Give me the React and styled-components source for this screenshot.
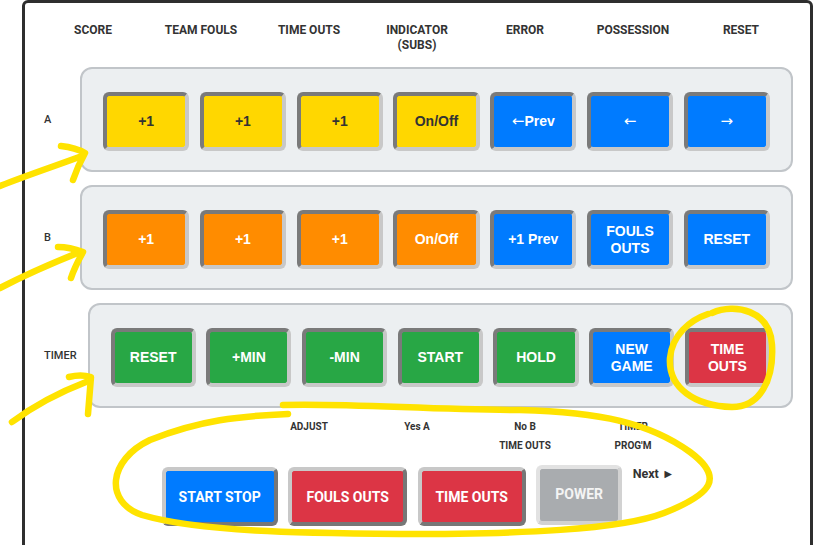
import styled, { createGlobalStyle } from 'styled-components';

const GlobalStyle = createGlobalStyle`
  body {
    margin: 0;
    background: #fff;
    font-family: Roboto, "Liberation Sans", sans-serif;
  }
`;

const headers = [
  'SCORE',
  'TEAM FOULS',
  'TIME OUTS',
  ['INDICATOR', '(SUBS)'],
  'ERROR',
  'POSSESSION',
  'RESET',
];

const YELLOW = '#ffd700';
const ORANGE = '#ff8c00';
const BLUE = '#007bff';
const GREEN = '#28a745';
const RED = '#dc3545';

const rowA = [
  { text: '+1', bg: YELLOW, fg: '#333' },
  { text: '+1', bg: YELLOW, fg: '#333' },
  { text: '+1', bg: YELLOW, fg: '#333' },
  { text: 'On/Off', bg: YELLOW, fg: '#333' },
  { arrow: '←', text: 'Prev', bg: BLUE },
  { arrow: '←', bg: BLUE },
  { arrow: '→', bg: BLUE },
];

const rowB = [
  { text: '+1', bg: ORANGE },
  { text: '+1', bg: ORANGE },
  { text: '+1', bg: ORANGE },
  { text: 'On/Off', bg: ORANGE },
  { text: '+1 Prev', bg: BLUE },
  { text: ['FOULS', 'OUTS'], bg: BLUE },
  { text: 'RESET', bg: BLUE },
];

const rowTimer = [
  { text: 'RESET', bg: GREEN },
  { text: '+MIN', bg: GREEN },
  { text: '-MIN', bg: GREEN },
  { text: 'START', bg: GREEN },
  { text: 'HOLD', bg: GREEN },
  { text: ['NEW', 'GAME'], bg: BLUE },
  { text: ['TIME', 'OUTS'], bg: RED },
];

const notes = [null, null, ['ADJUST'], ['Yes A'], ['No B', 'TIME OUTS'], ['TIMER', "PROG'M"], null];

function Lines({ text }) {
  if (!Array.isArray(text)) return text;
  return text.map((t, i) => (
    <span key={i}>
      {i > 0 && <br />}
      {t}
    </span>
  ));
}

function ControlRow({ label, buttons }) {
  return (
    <Row>
      <RowLabel>{label}</RowLabel>
      <Panel>
        {buttons.map((b, i) => (
          <PadButton key={i} $bg={b.bg} $fg={b.fg || '#fff'}>
            {b.arrow && <Arrow>{b.arrow}</Arrow>}
            {b.text && <Lines text={b.text} />}
          </PadButton>
        ))}
      </Panel>
    </Row>
  );
}

export default function App() {
  return (
    <Page>
      <GlobalStyle />
      <Frame>
        <Columns>
          {headers.map((h, i) => (
            <HeaderCell key={i}>
              <Lines text={h} />
            </HeaderCell>
          ))}
        </Columns>
        <ControlRow label='A' buttons={rowA} />
        <ControlRow label='B' buttons={rowB} />
        <ControlRow label='TIMER' buttons={rowTimer} />
        <NoteGrid>
          {notes.map((n, i) => (
            <NoteCell key={i}>{n && <Lines text={n} />}</NoteCell>
          ))}
        </NoteGrid>
        <BottomRow>
          <BigButton $bg={BLUE} $w={116}>START STOP</BigButton>
          <BigButton $bg={RED} $w={119}>FOULS OUTS</BigButton>
          <BigButton $bg={RED} $w={108}>TIME OUTS</BigButton>
          <PowerButton $w={86}>POWER</PowerButton>
          <NextLink>Next ►</NextLink>
        </BottomRow>
      </Frame>
      <Scribbles viewBox='0 0 814 545'>
        <g fill='none' stroke='#ffe300' strokeWidth='6.5' strokeLinecap='round' strokeLinejoin='round'>
          <path d='M0 186 C25 176 55 166 82 156' />
          <path d='M61 146 C70 147 78 149 85 153 C80 162 76 171 73 180' />
          <path d='M0 288 C25 275 55 262 80 252' />
          <path d='M58 247 C67 247 75 249 83 252 C78 261 74 269 71 278' />
          <path d='M12 422 C35 405 60 392 86 382' />
          <path d='M69 377 C77 375 84 375 91 377 C90 389 89 401 88 414' />
          <path d='M712 313 C735 303 770 310 772 345 C774 380 760 407 732 407 C695 406 668 388 670 358 C672 335 690 320 708 314' />
          <path d='M283 405 C350 403 430 410 520 410 C600 412 650 423 690 452 C725 478 712 494 664 513 C620 530 520 534 400 534 C300 533 200 532 142 515 C104 502 108 460 150 440 C200 420 240 416 288 414' />
        </g>
      </Scribbles>
    </Page>
  );
}

const Page = styled.div`
  position: relative;
  width: 814px;
  height: 545px;
  overflow: hidden;
  padding-left: 22px;
  box-sizing: border-box;
`;

const Frame = styled.div`
  width: 791px;
  height: 580px;
  box-sizing: border-box;
  border: 3px solid #2e2e2e;
  border-radius: 6px;
  padding: 20px 17px 0 0;
  color: #333;
`;

const Columns = styled.div`
  display: grid;
  grid-template-columns: repeat(7, 108px);
  width: 756px;
  margin: 0 auto 14px;
  transform: translateX(8px);
`;

const HeaderCell = styled.div`
  text-align: center;
  font-family: Roboto, sans-serif;
  font-weight: 700;
  font-size: 12px;
  line-height: 15px;
  color: #333;
`;

const Row = styled.div`
  display: flex;
  align-items: center;
  margin-bottom: 13px;
`;

const RowLabel = styled.div`
  min-width: 55px;
  box-sizing: border-box;
  padding: 0 11px 0 19px;
  font-family: Roboto, sans-serif;
  font-weight: 500;
  font-size: 11px;
  color: #333;
`;

const Panel = styled.div`
  flex: 1;
  display: flex;
  gap: 10.5px;
  padding: 23px 21px 19px;
  background: #eceff1;
  border: 2px solid #c1c5c9;
  border-radius: 12px;
`;

const PadButton = styled.button`
  flex: 1;
  height: 59px;
  padding: 0;
  border: 4px solid;
  border-color: #7a7a7a #c8c8c8 #c8c8c8 #7a7a7a;
  border-radius: 6px;
  background: ${(p) => p.$bg};
  color: ${(p) => p.$fg};
  font-family: "Liberation Sans", Arial, sans-serif;
  font-weight: 700;
  font-size: 14px;
  line-height: 17px;
`;

const Arrow = styled.span`
  font-family: "DejaVu Sans", sans-serif;
  font-weight: 400;
  font-size: 15px;
`;

const NoteGrid = styled.div`
  display: grid;
  grid-template-columns: repeat(7, 108px);
  width: 756px;
  margin: -4px auto 0;
  transform: translateX(8px);
`;

const NoteCell = styled.div`
  text-align: center;
  font-family: Roboto, sans-serif;
  font-weight: 700;
  font-size: 10px;
  line-height: 19px;
  color: #333;
`;

const BottomRow = styled.div`
  display: flex;
  justify-content: center;
  align-items: flex-start;
  gap: 10.5px;
  margin-top: 12px;
  transform: translateX(9px);
`;

const BigButton = styled.button`
  width: ${(p) => p.$w}px;
  height: 59px;
  padding: 0;
  border: 4px solid;
  border-color: #c8c8c8 #777 #777 #c8c8c8;
  border-radius: 6px;
  background: ${(p) => p.$bg};
  color: #fff;
  font-family: Roboto, sans-serif;
  font-weight: 700;
  font-size: 14px;
`;

const PowerButton = styled(BigButton)`
  margin-top: -2px;
  height: 60px;
  padding-bottom: 3px;
  background: #a9acaf;
  border-color: #e2e2e2 #d2d2d2 #d2d2d2 #e2e2e2;
  color: #f4f4f4;
`;

const NextLink = styled.span`
  font-family: Roboto, sans-serif;
  font-weight: 700;
  font-size: 12.5px;
  color: #333;
  margin-top: -1px;
`;

const Scribbles = styled.svg`
  position: absolute;
  left: 0;
  top: 0;
  width: 814px;
  height: 545px;
  pointer-events: none;
`;
